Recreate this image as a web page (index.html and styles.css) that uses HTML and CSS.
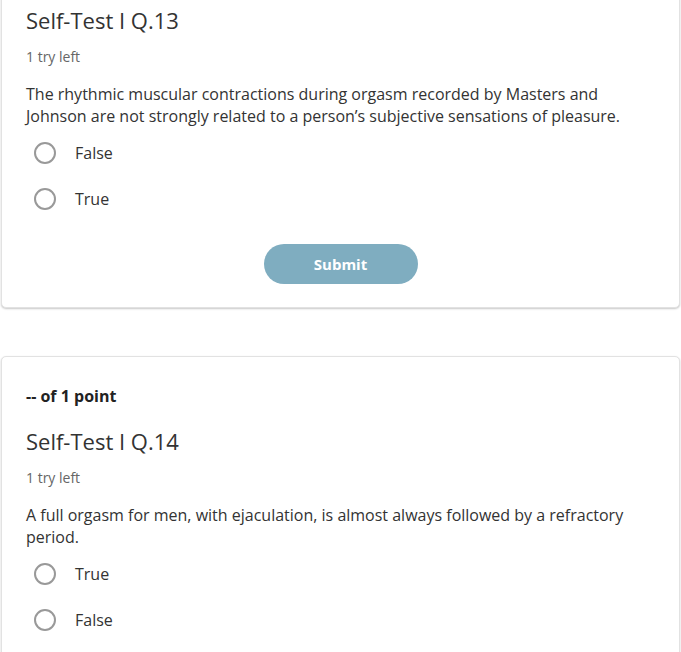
FILE: index.html
```html
<!DOCTYPE html>
<html lang="en">
<head>
  <meta charset="UTF-8">
  <meta name="viewport" content="width=device-width, initial-scale=1.0">
  <title>Self-Test</title>
  <link rel="stylesheet" href="styles.css">
</head>
<body>
  <div class="page">
    <section class="card">
      <p class="points">-- of 1 point</p>
      <h2 class="qtitle">Self-Test I Q.13</h2>
      <p class="tries">1 try left</p>
      <p class="qtext">The rhythmic muscular contractions during orgasm recorded by Masters and Johnson are not strongly related to a person’s subjective sensations of pleasure.</p>
      <ul class="options">
        <li class="option"><span class="radio"></span>False</li>
        <li class="option"><span class="radio"></span>True</li>
      </ul>
      <div class="actions">
        <button class="submit">Submit</button>
      </div>
    </section>

    <section class="card">
      <p class="points">-- of 1 point</p>
      <h2 class="qtitle">Self-Test I Q.14</h2>
      <p class="tries">1 try left</p>
      <p class="qtext">A full orgasm for men, with ejaculation, is almost always followed by a refractory period.</p>
      <ul class="options">
        <li class="option"><span class="radio"></span>True</li>
        <li class="option"><span class="radio"></span>False</li>
      </ul>
    </section>
  </div>
</body>
</html>
```

FILE: styles.css
```css
* {
  margin: 0;
  padding: 0;
  box-sizing: border-box;
}
body {
  background: #fff;
  font-family: "Open Sans", "Liberation Sans", sans-serif;
  color: #333;
}
/* first card is scrolled partly out of view */
.page {
  margin-top: -65px;
  padding: 0 1px 0 1px;
  display: flex;
  flex-direction: column;
  gap: 48px;
}
.card {
  background: #fff;
  border: 1px solid #e2e2e2;
  border-radius: 5px;
  box-shadow: 0 1px 2px rgba(0, 0, 0, 0.22);
  padding: 28px 24px 23px 24px;
}
.points {
  font-size: 16px;
  font-weight: 700;
  line-height: 22px;
  color: #222;
}
.qtitle {
  margin-top: 19px;
  font-size: 22px;
  font-weight: 400;
  line-height: 30px;
  color: #333;
}
.tries {
  margin-top: 12px;
  font-size: 14px;
  line-height: 20px;
  color: #666;
}
.qtext {
  margin-top: 16px;
  font-size: 16px;
  line-height: 22px;
  color: #333;
}
.options {
  list-style: none;
  margin-top: 3px;
}
.option {
  display: flex;
  align-items: center;
  gap: 19px;
  height: 46px;
  padding-left: 8px;
  font-size: 16px;
  color: #333;
}
.radio {
  width: 22px;
  height: 22px;
  border: 2px solid #999;
  border-radius: 50%;
}
.actions {
  display: flex;
  justify-content: center;
  margin-top: 22px;
}
.submit {
  width: 154px;
  height: 40px;
  border: none;
  border-radius: 20px;
  background: #7fadc0;
  color: #fff;
  font-family: "Open Sans", "Liberation Sans", sans-serif;
  font-size: 15px;
  font-weight: 700;
}
```
